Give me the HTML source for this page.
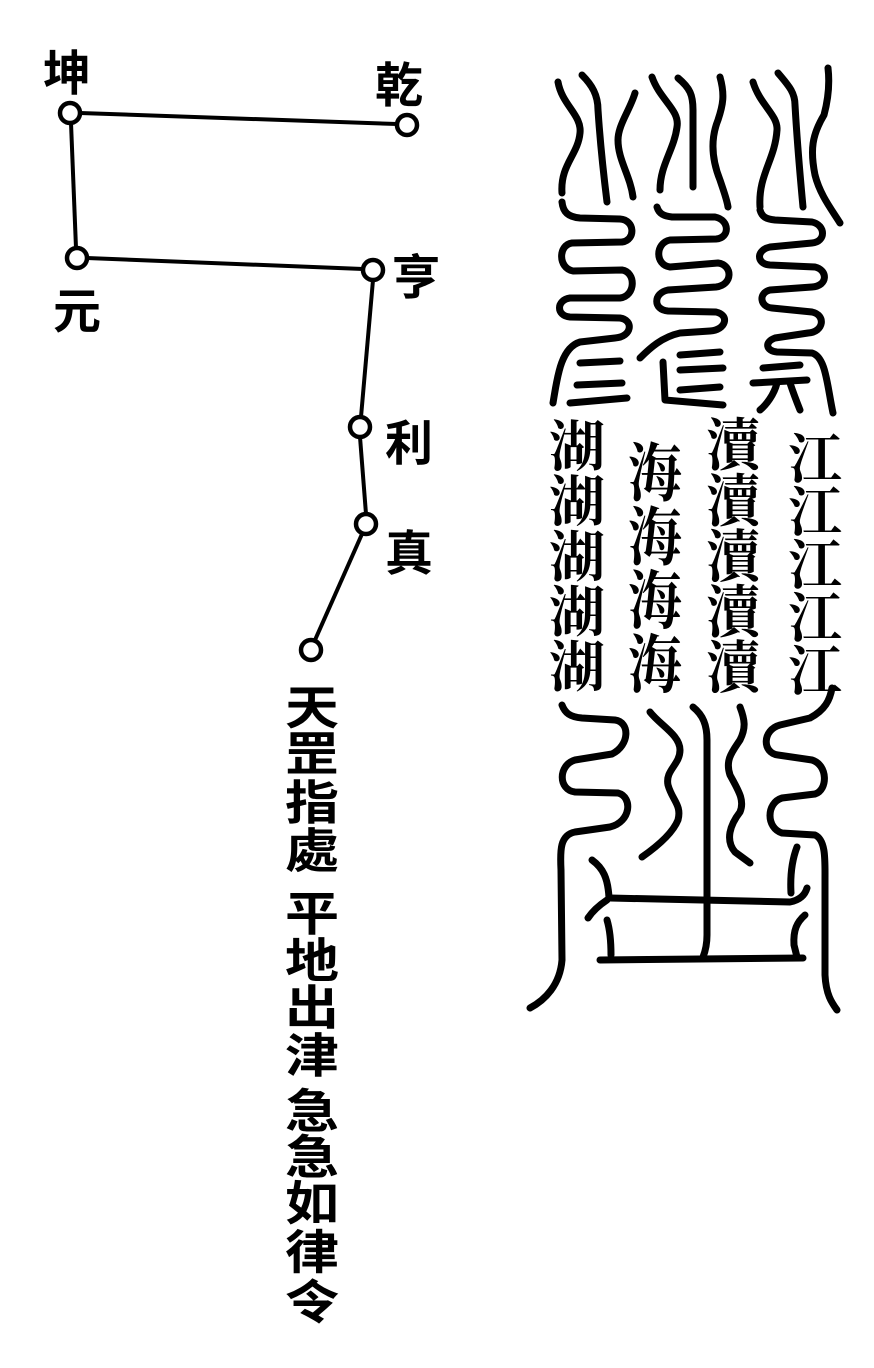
<!DOCTYPE html>
<html><head><meta charset="utf-8"><style>
html,body{margin:0;padding:0;background:#fff;}
svg{display:block}
.s{font-family:"Noto Sans CJK SC","WenQuanYi Zen Hei",sans-serif;font-weight:700;fill:#000}
.m{font-family:"Noto Serif CJK SC","Noto Sans CJK SC",serif;font-weight:700;fill:#000}
</style></head><body>
<svg width="874" height="1368" viewBox="0 0 874 1368" xmlns="http://www.w3.org/2000/svg">
<g fill="none" stroke="#000" stroke-width="4">
<line x1="80" y1="113" x2="397" y2="124"/>
<line x1="71" y1="123" x2="76" y2="248"/>
<line x1="87" y1="258" x2="363" y2="269"/>
<line x1="373" y1="280" x2="361" y2="417"/>
<line x1="360" y1="437" x2="366" y2="514"/>
<line x1="362" y1="534" x2="315" y2="640"/>
</g>
<g fill="#fff" stroke="#000" stroke-width="4.5">
<circle cx="70" cy="113" r="10"/><circle cx="407" cy="125" r="10"/>
<circle cx="77" cy="258" r="10"/><circle cx="373" cy="270" r="10"/>
<circle cx="360" cy="427" r="10"/><circle cx="366" cy="524" r="10"/>
<circle cx="311" cy="650" r="10"/>
</g>
<g class="s" font-size="48">
<text x="43" y="90">坤</text>
<text x="375" y="102">乾</text>
<text x="53" y="328">元</text>
<text x="392" y="294">亨</text>
<text x="385" y="460">利</text>
<text x="385" y="570">真</text>
</g>
<g class="s" font-size="50">
<g transform="translate(285,0) scale(1.08,0.94)">
<text x="0" y="771">天</text><text x="0" y="820">罡</text><text x="0" y="872">指</text><text x="0" y="923">處</text>
<text x="0" y="990">平</text><text x="0" y="1040">地</text><text x="0" y="1090">出</text><text x="0" y="1141">津</text>
<text x="0" y="1200">急</text><text x="0" y="1249">急</text><text x="0" y="1298">如</text><text x="0" y="1350">律</text><text x="0" y="1403">令</text>
</g>
</g>
<g class="m" font-size="54">
<g transform="translate(788,0) scale(1.0,1.0)">
<text x="0" y="478">江</text><text x="0" y="531">江</text><text x="0" y="584">江</text><text x="0" y="637">江</text><text x="0" y="690">江</text>
</g>
<g transform="translate(706,0) scale(1.0,1.05)">
<text x="0" y="443">瀆</text><text x="0" y="496">瀆</text><text x="0" y="549">瀆</text><text x="0" y="602">瀆</text><text x="0" y="655">瀆</text>
</g>
<g transform="translate(628,0) scale(1.0,1.18)">
<text x="0" y="420">海</text><text x="0" y="474">海</text><text x="0" y="528">海</text><text x="0" y="582">海</text>
</g>
<g transform="translate(549,0) scale(1.04,1.02)">
<text x="0" y="457">湖</text><text x="0" y="511">湖</text><text x="0" y="565">湖</text><text x="0" y="619">湖</text><text x="0" y="673">湖</text>
</g>
</g>
<g fill="none" stroke="#000" stroke-width="7" stroke-linecap="round" stroke-linejoin="round">
<path d="M558,82 C562,105 582,115 580,133 C578,155 560,165 562,193"/>
<path d="M582,75 C592,85 598,95 598,110 C600,140 603,170 607,202"/>
<path d="M635,93 C630,110 618,125 618,140 C618,160 630,175 633,197"/>
<path d="M562,202 C563,212 568,217 580,218 L620,219 C635,220 636,240 622,242 L572,243 C558,245 558,268 573,271 L622,270 C636,272 636,296 620,298 L570,298 C556,300 556,316 570,317 L620,318 C634,320 632,337 615,338 L580,342 C560,348 557,380 553,403"/>
<path d="M580,363 L620,361"/><path d="M577,385 L622,383"/><path d="M570,403 L627,398"/>
<path d="M652,77 C660,100 680,110 677,127 C674,150 660,165 660,190"/>
<path d="M678,78 C690,88 693,95 693,110 L693,187"/>
<path d="M720,77 C725,95 723,105 718,120 C710,140 712,160 720,180 C725,195 727,200 728,207"/>
<path d="M657,207 C659,214 664,216 672,217 L715,217 C730,220 730,238 716,239 L670,240 C655,243 655,265 670,267 L718,263 C733,265 733,285 716,287 L668,290 C653,293 653,310 668,311 L716,312 C730,315 726,330 710,331 L680,333 C662,337 650,348 640,358"/>
<path d="M663,362 L665,400 L723,405"/>
<path d="M680,355 L720,352"/><path d="M680,370 L723,368"/><path d="M680,390 L720,387"/>
<path d="M753,82 C760,105 778,115 777,130 C775,160 758,175 760,207"/>
<path d="M778,73 C788,85 795,92 795,105 C797,140 800,175 803,207"/>
<path d="M828,68 C830,85 828,100 824,115 C812,135 810,150 815,175 C820,195 832,210 840,223"/>
<path d="M760,210 C762,217 766,219 775,220 L812,222 C826,225 826,242 812,243 L770,247 C756,250 756,264 770,265 L815,267 C828,270 828,286 812,287 L770,290 C758,293 760,307 772,308 L812,312 C826,315 824,332 808,333 L775,338 C764,342 766,351 777,352 L812,353 C826,357 827,385 833,413"/>
<path d="M763,368 L800,365"/><path d="M753,383 L807,380"/>
<path d="M777,383 C774,395 766,405 760,410"/><path d="M790,383 C794,395 798,405 800,410"/>
<path d="M562,705 C565,713 570,717 582,718 L615,720 C630,722 630,745 612,754 L575,760 C558,765 558,790 575,792 L618,793 C633,797 631,822 610,827 L575,832 C560,835 560,850 561,870 L562,960 C560,985 545,1000 530,1008"/>
<path d="M832,688 C830,700 825,710 810,718 L780,725 C762,730 762,753 778,755 L812,760 C828,765 828,790 815,794 L782,798 C766,803 766,828 782,833 L815,835 C826,840 825,860 825,880 L825,975 C826,995 832,1003 837,1010"/>
<path d="M650,712 C660,725 680,735 680,750 C680,765 665,770 668,785 C672,800 682,805 678,820 C672,835 652,850 642,857"/>
<path d="M693,707 C703,715 707,725 707,740 L707,935 C707,945 705,952 703,957"/>
<path d="M740,707 C745,720 746,728 740,740 C732,752 725,760 730,775 C738,790 745,800 740,812 C730,825 725,840 735,852 L750,863"/>
<path d="M592,860 C603,868 608,878 609,898"/>
<path d="M610,898 L790,902 C800,900 805,895 807,888"/>
<path d="M607,900 C598,906 592,912 588,918"/>
<path d="M797,847 C792,860 790,875 791,893"/>
<path d="M607,920 C610,930 611,945 611,955"/>
<path d="M600,960 L803,958"/>
<path d="M805,915 C797,922 793,930 794,945 L797,957"/>
</g>
</svg>
</body></html>
